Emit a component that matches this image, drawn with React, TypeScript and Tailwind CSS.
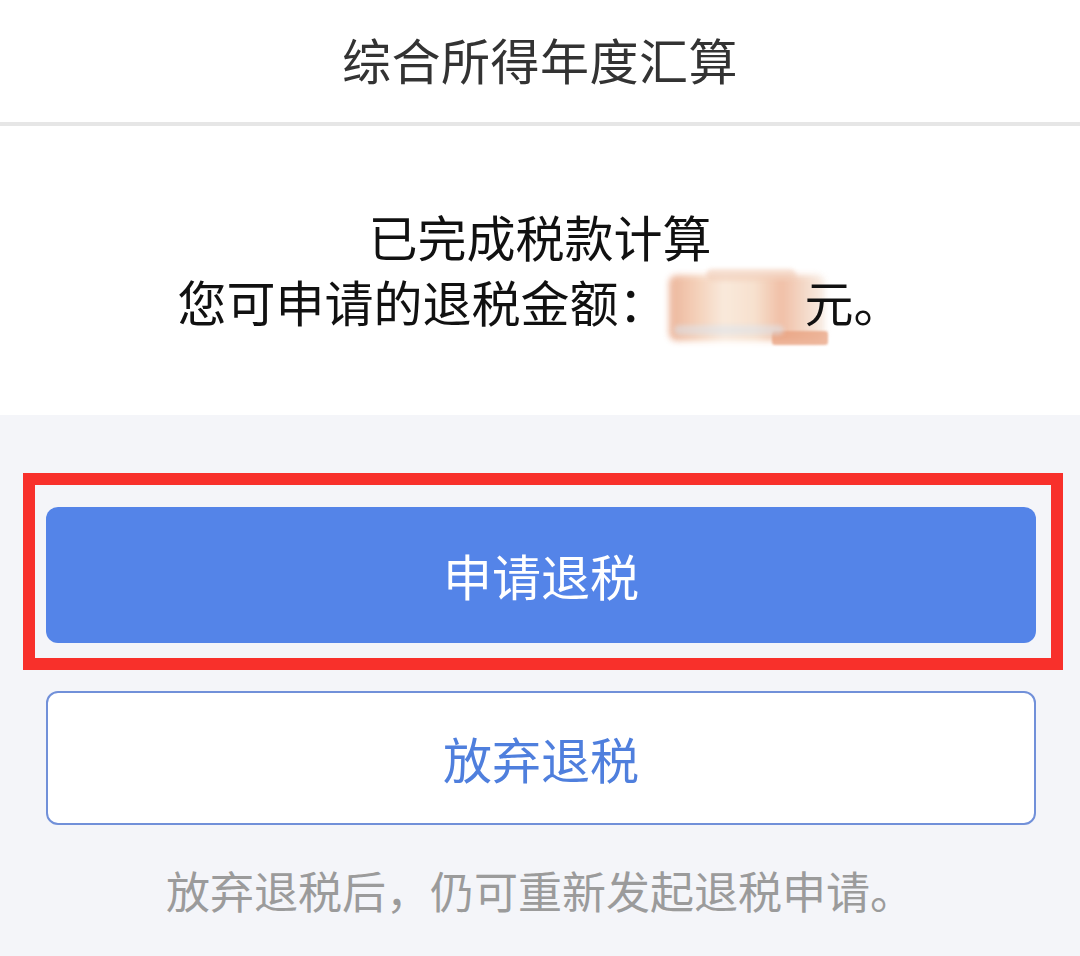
import React from 'react';

const FONT = "font-['Noto_Sans_CJK_SC','Noto_Sans',sans-serif]";

// smudged-out refund amount
const Smudge: React.FC = () => (
  <span className="relative inline-block w-[137px] h-[60px] align-middle">
    <span className="absolute left-[1px] top-[-4px] w-[156px] h-[66px] rounded-[8px] bg-[linear-gradient(90deg,#e9a98a_0%,#f3c9ae_18%,#f8e6d6_35%,#f6dcc6_55%,#eeb497_72%,#f3d5c2_88%,#f7ebe2_100%)] opacity-85 blur-[3px]" />
    <span className="absolute left-[38px] top-[-10px] w-[90px] h-[12px] rounded-full bg-[#f1cbb5] opacity-60 blur-[2px]" />
    <span className="absolute left-[104px] top-[52px] w-[56px] h-[14px] rounded-[3px] bg-[#e9a17f] opacity-75 blur-[1px]" />
    <span className="absolute left-[6px] top-[46px] w-[110px] h-[10px] rounded-full bg-[#dbe4ee] opacity-50 blur-[2px]" />
  </span>
);

const App: React.FC = () => {
  return (
    <div className={`${FONT} w-[1080px] h-[956px] bg-[#f4f5f9] flex flex-col overflow-hidden`}>
      {/* Header */}
      <div className="h-[126px] bg-white border-b-4 border-[#e6e6e6] flex items-center justify-center pb-[6px]">
        <h1 className="text-[49px] leading-none text-[#333333] tracking-[0.5px]">综合所得年度汇算</h1>
      </div>

      {/* Result */}
      <div className="h-[289px] bg-white pt-[77px] text-center text-[49px] leading-[65px] text-[#111111]">
        <p>已完成税款计算</p>
        <p>
          您可申请的退税金额：<Smudge /><span className="relative">元。</span>
        </p>
      </div>

      {/* Actions */}
      <div className="flex-1 pt-[92px] pl-[46px] pr-[44px] flex flex-col">
        <div className="relative">
          <button className="w-full h-[136px] rounded-[12px] bg-[#5484e8] text-white text-[49px]">
            申请退税
          </button>
          <div className="absolute top-[-34px] left-[-23px] right-[-27px] bottom-[-27px] border-[12px] border-[#f8302b] pointer-events-none" />
        </div>
        <button className="mt-[48px] w-full h-[134px] rounded-[12px] bg-white border-2 border-[#7190d9] text-[#4f7fdd] text-[49px]">
          放弃退税
        </button>
        <p className="mt-[35px] text-center text-[44px] leading-[60px] text-[#9b9b9b] pr-[2px]">
          放弃退税后，仍可重新发起退税申请。
        </p>
      </div>
    </div>
  );
};

export default App;
